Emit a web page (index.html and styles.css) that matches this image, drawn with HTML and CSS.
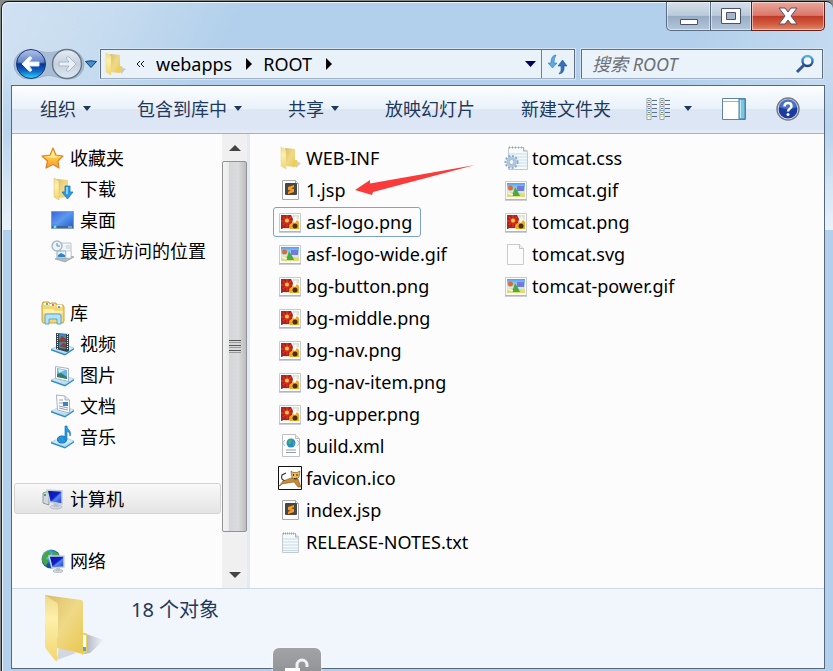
FILE: index.html
```html
<!DOCTYPE html>
<html lang="zh-CN">
<head>
<meta charset="utf-8">
<title>ROOT</title>
<link rel="stylesheet" href="styles.css">
</head>
<body>
<svg class="defs" aria-hidden="true">
  <defs>
    <linearGradient id="gold" x1="0" x2="1" y2="1"><stop offset="0" stop-color="#fdf0b0"/><stop offset="1" stop-color="#e9c95c"/></linearGradient>
    <linearGradient id="goldback" x1="0" x2="1" y2="1"><stop offset="0" stop-color="#d9bd67"/><stop offset=".5" stop-color="#efd987"/><stop offset="1" stop-color="#e8c84f"/></linearGradient>
    <linearGradient id="goldfront" x2="0" y2="1"><stop offset="0" stop-color="#efd98b"/><stop offset=".35" stop-color="#fdf0aa"/><stop offset="1" stop-color="#f3d672"/></linearGradient>
    <linearGradient id="shade"><stop offset="0" stop-color="#9aa1ae" stop-opacity=".8"/><stop offset="1" stop-color="#9aa1ae" stop-opacity="0"/></linearGradient>
    <linearGradient id="blueorb" x2="0" y2="1"><stop offset="0" stop-color="#9fb4e4"/><stop offset=".45" stop-color="#3c65bb"/><stop offset=".5" stop-color="#0b3392"/><stop offset=".75" stop-color="#0d6bc8"/><stop offset="1" stop-color="#35d8fb"/></linearGradient>
    <linearGradient id="greyorb" x2="0" y2="1"><stop offset="0" stop-color="#e6edf5"/><stop offset=".5" stop-color="#c5d1de"/><stop offset="1" stop-color="#dce8f3"/></linearGradient>
    <linearGradient id="sky" x2="0" y2="1"><stop offset="0" stop-color="#4f9ff0"/><stop offset=".6" stop-color="#cfeaf9"/><stop offset="1" stop-color="#f0e27c"/></linearGradient>
    <linearGradient id="screen" x2="1" y2="1"><stop offset="0" stop-color="#1c43c8"/><stop offset=".5" stop-color="#5596ee"/><stop offset="1" stop-color="#2157c9"/></linearGradient>
    <linearGradient id="monitor" x2="1" y2="1"><stop offset="0" stop-color="#0a17a0"/><stop offset=".5" stop-color="#0d20c8"/><stop offset=".6" stop-color="#5b86f2"/><stop offset="1" stop-color="#1733cc"/></linearGradient>
    <linearGradient id="star" x2="0" y2="1"><stop offset="0" stop-color="#fff08a"/><stop offset=".5" stop-color="#fdc644"/><stop offset="1" stop-color="#f7952a"/></linearGradient>
    <linearGradient id="base" x2="0" y2="1"><stop offset="0" stop-color="#f1f9fd"/><stop offset="1" stop-color="#a9d7f0"/></linearGradient>
    <linearGradient id="glyph" x2="0" y2="1"><stop offset="0" stop-color="#59b4ea"/><stop offset="1" stop-color="#1d3f8e"/></linearGradient>
    <radialGradient id="globe" cx=".35" cy=".3"><stop offset="0" stop-color="#a6e7f8"/><stop offset=".6" stop-color="#318fc9"/><stop offset="1" stop-color="#11539a"/></radialGradient>

    <symbol id="folder" viewBox="0 0 24 24">
      <path d="M18 15 23 17 18 22Z" fill="#aab0ba" opacity=".6"/>
      <path d="M7 2 17 3V21L7 20Z" fill="url(#goldback)"/><path d="M16 14h3v6l-3 1Z" fill="#efcf57"/>
      <path d="M3 1 8 4V23L3 20Z" fill="url(#goldfront)" stroke="#ead48a" stroke-width=".5"/>
    </symbol>
    <symbol id="downloads" viewBox="0 0 24 24">
      <path d="M6 2 17 3V20L7 21Z" fill="url(#goldback)"/><path d="M3 1 8 4V23L3 20Z" fill="url(#goldfront)" stroke="#d9bd69" stroke-width=".5"/>
      <path d="M14 9h5v6h3l-5.500 7-5.500-7h3Z" fill="#2d9be5" stroke="#1b76bd" stroke-width=".8"/><path d="M15 10h2v7h-2Z" fill="#83d0fa"/>
    </symbol>
    <symbol id="favorite" viewBox="0 0 24 24">
      <path d="M12 2 15 9 22 10 17 15 18 22 12 18.500 5 22 6.500 15 1 10 9 9Z" fill="url(#star)" stroke="#dc8527" stroke-width="1.200" stroke-linejoin="round"/>
      <path d="M12 5 13.500 10 18 11 12 12 6 11 10 10Z" fill="#fff6b8" opacity=".7"/>
    </symbol>
    <symbol id="desktop" viewBox="0 0 24 24">
      <path d="M.5 3.500h22v17H.5Z" fill="url(#screen)" stroke="#7f9bc8"/><path d="M1 18h21v2H1Z" fill="#3e6597"/><path d="M1 4h20L6 16H1Z" fill="#7db0f5" opacity=".3"/><circle cx="4" cy="19" r="1.500" fill="#77e0e8"/><path d="M17 19h4" stroke="#c2d7ef"/>
    </symbol>
    <symbol id="recent" viewBox="0 0 24 24">
      <path d="M4 20 15 15 23 18 14 23Z" fill="#b4babf" stroke="#8b939b" stroke-width=".6"/>
      <path d="M9 4h11v12H9Z" fill="#f1f5f8" stroke="#b9c4cb"/><path d="M15 6h4v4h-4Z" fill="#d3e0e9"/><path d="M6 12h9v7H6Z" fill="#e8f5fc" stroke="#90a8ba"/><path d="M7 16l3-2 4 2v2H7Z" fill="#2b86c9"/><path d="M15 12h5v7h-5Z" fill="#fff" stroke="#b0bcc5" stroke-width=".6"/>
      <circle cx="6" cy="7" r="5" fill="#eaf4fb" stroke="#adbac6" stroke-width="1.500"/><path d="M6 4v3h3" fill="none" stroke="#5e88b0"/>
    </symbol>
    <symbol id="library" viewBox="0 0 24 24">
      <path d="M1 4 2 1h6l1 2 1-1h5l1 2h6l1 2v14l-1 2H2l-1-2Z" fill="#f3d775" stroke="#c8a341"/>
      <path d="M2 8h10l2 2h8v2H2Z" fill="#fff0ac"/><path d="M3 3h5M9 4h5M16 5h5" stroke="#fffce8" stroke-width="2"/><circle cx="6" cy="3" r="1" fill="#33a946"/><circle cx="12" cy="4" r="1" fill="#e2432b"/><circle cx="18" cy="6" r="1" fill="#258be0"/>
      <path d="M4 23v-8q0-2 2-2h12q2 0 2 2v8h-4v-5H8v5Z" fill="#b5e3f6" stroke="#58a7ce"/>
    </symbol>
    <symbol id="plate" viewBox="0 0 24 24"><path d="M0 17 12 12 23 16 14 22Z" fill="url(#base)" stroke="#8bc3e2" stroke-width=".6"/><path d="M0 17 14 22 23 16v1.500L14 23.500 0 18.500Z" fill="#318ac6"/></symbol>
    <symbol id="video" viewBox="0 0 24 24">
      <use href="#plate"/><path d="M5 1 18 2v17l-2 1-11-3Z" fill="#35454c"/><path d="M8 2h7v7H8Z" fill="#3e87cb"/><path d="M8 10h7v7l-7-1Z" fill="#527ba5"/><path d="m8 8 3-4 4 3v3H8ZM9 14l3-3 3 1v4Z" fill="#8d3f2e"/><path d="M6.500 2v15M16.500 2v16" stroke="#e2edf0" stroke-dasharray="1 1"/>
    </symbol>
    <symbol id="pictures" viewBox="0 0 24 24">
      <use href="#plate"/><path d="M4.500 3.500 17.500 5.500V18.500L4.500 15.500Z" fill="#fff" stroke="#a6b3bf"/><path d="M6 5 16 7V16L6 14Z" fill="#69b3e7"/><path d="M6 11 10 10 16 14V16L6 14Z" fill="#357d64"/><path d="M7 6 14 7 8 10Z" fill="#d0ecfc"/>
    </symbol>
    <symbol id="docs" viewBox="0 0 24 24">
      <use href="#plate"/><path d="M5.500 1 14 2 18.500 6V19L6.500 16Z" fill="#fff" stroke="#a6b3bf"/><path d="M14 2V6H18.500" fill="#dbe6ee" stroke="#a6b3bf"/><path d="M8 6h4M8 9h4M8 12l9 2M8 14l9 2" stroke="#8d9abd"/><path d="M12 8h5v4h-5Z" fill="#3d82c3"/>
    </symbol>
    <symbol id="music" viewBox="0 0 24 24">
      <use href="#plate"/><ellipse cx="11" cy="14.500" rx="4.500" ry="3.500" fill="#2494df" stroke="#1476b9"/><path d="M14 15V1h2c0 4 5 4 3 10 0-4-2-4-3-5v9Z" fill="#299ae2" stroke="#1978b8" stroke-width=".7"/>
    </symbol>
    <symbol id="computer" viewBox="0 0 24 24">
      <path d="M2 6 8 4V18L2 16Z" fill="#d1d7dc" stroke="#8c98a1"/><path d="M3 7h2v2H3Z" fill="#3fac49"/><ellipse cx="15" cy="20" rx="6" ry="2" fill="#d3d8dd" stroke="#a3abb4" stroke-width=".6"/><path d="m12 15 5 1 1 4h-5Z" fill="#b8c1cb"/><path d="M6 3 21 4V17L9 15Z" fill="url(#monitor)" stroke="#c4ced9" stroke-width="1.500"/>
    </symbol>
    <symbol id="network" viewBox="0 0 24 24">
      <circle cx="10" cy="10" r="9.500" fill="url(#globe)"/><path d="M2 7Q6 0 10 3L9 7 5 9 7 13 5 17Q-1 12 2 7ZM13 2l5 3-2 3-4-2Z" fill="#48a83e"/>
      <ellipse cx="17" cy="22" rx="5" ry="1.700" fill="#d0d7e0" stroke="#9aa4af" stroke-width=".5"/><path d="M15 18h4v4h-4Z" fill="#b8c2cc"/><path d="M8 7 23 7V18L11 19Z" fill="url(#monitor)" stroke="#c7d3df" stroke-width="1.500"/>
    </symbol>
    <symbol id="jsp" viewBox="0 0 24 24">
      <path d="M4.500 2.500h13l3 3v16h-16Z" fill="#fdfdfd" stroke="#aaadb0"/><path d="M17.500 2.500v3h3" fill="#ececec" stroke="#a7a7a7"/><rect x="7" y="5" width="12" height="12" rx="1" fill="#474747"/><path d="M16 7 10 9v3l3 .8-3 1V16l6-2v-3l-3-.8 3-1Z" fill="#ff9a16"/>
    </symbol>
    <symbol id="frame" viewBox="0 0 24 24"><path d="M1.500 3.500h21v18h-21Z" fill="#fff" stroke="#c9cccf"/><path d="M1 22h22" stroke="#9da2a6"/></symbol>
    <symbol id="png" viewBox="0 0 24 24">
      <use href="#frame"/><path d="M3 5h18v14H3Z" fill="#dfe4d5"/><path d="M13 6l3 2 2-2 1 3 2 1v4h-7Z" fill="#f9faf7"/><path d="M3 5h10l2 4-1 5-3 4H3Z" fill="#b3211a"/><g stroke="#d8352a" stroke-width="1.500"><path d="M9 5v12M3 11h11M5 7l8 8M13 7l-8 8"/></g><path d="M3 5h2L3 8ZM3 17l2 2H3Z" fill="#4f5c31"/><circle cx="9" cy="10.500" r="2" fill="#f0cb3a"/><path d="m11 15 4-3 2 1 2-3 2 2v7h-9Z" fill="#f5a91e"/><circle cx="17" cy="16" r="2.500" fill="#4a2c12"/>
    </symbol>
    <symbol id="gif" viewBox="0 0 24 24">
      <use href="#frame"/><path d="M3 5h18v14H3Z" fill="url(#sky)"/><path d="M13 8h7v5h-7Z" fill="#7777dc"/><path d="M3 15q6-2 18 1v3H3Z" fill="#e7d96f"/><circle cx="6.500" cy="10" r="2.500" fill="#e26b28"/><path d="m8 18 3-9q3 4 5 9Z" fill="#45ab45"/><path d="m4 15 5 2" stroke="#e6fbf7" stroke-width="1.500"/>
    </symbol>
    <symbol id="blank" viewBox="0 0 24 24"><path d="M3.500 2.500h12l4 4v16h-16Z" fill="#fcfcfc" stroke="#c8cacc"/><path d="M15.500 2.500v4h4" fill="#f0f0f0" stroke="#c1c3c5"/></symbol>
    <symbol id="xml" viewBox="0 0 24 24">
      <path d="M4.500.500h13l4 4v18h-17Z" fill="#fff" stroke="#bfc2c5"/><path d="M17.500.500v4h4" fill="#e5e5e5" stroke="#bfc2c5"/><circle cx="13" cy="9" r="4.500" fill="#268ccc"/><path d="M10 7l3-2 1 3-3 3Zm5 1 2 1-2 4Z" fill="#4ab15a"/><path d="M7 6 4.500 9 7 12M19 6l2.500 3L19 12" fill="none" stroke="#a6b5dd"/><path d="M8 16h10M8 18.500h10" stroke="#9797b4" stroke-width="1.200"/>
    </symbol>
    <symbol id="cat" viewBox="0 0 24 24">
      <path d="M.5.500h23v23H.5Z" fill="#fff" stroke="#111"/><path d="M8 15Q2 14 4 9L8 7" fill="none" stroke="#333" stroke-width="1.200"/><path d="M1 20 5 15l8-3 7 1 3 8h-3l-4-5-6 1-6 1-2 2Z" fill="#c78a35" stroke="#714a1d" stroke-width=".5"/><path d="m13 5 2 1.500h4L22 5l-1 6-3 3-4-2Z" fill="#edbd54" stroke="#714a1d" stroke-width=".6"/><path d="M15.500 8v2M19 8v2M16 12l1 1 2-1" stroke="#382416" fill="none"/>
    </symbol>
    <symbol id="txt" viewBox="0 0 24 24">
      <path d="M4.500 3.500h13l3 3v16h-16Z" fill="#f6f9fb" stroke="#c4c9cd"/><path d="M5 9h15M5 12h15M5 15h15M5 18h15M5 20.500h15" stroke="#c4dbe7"/><path d="M5 3.500h12" stroke="#999ea3" stroke-width="2" stroke-dasharray="1 1"/><path d="M17.500 3v4h3" fill="#e9ecee" stroke="#a9aeb3"/>
    </symbol>
    <symbol id="css" viewBox="0 0 24 24">
      <path d="M4.500 1.500h15l4 4v18h-19Z" fill="#f7fafb" stroke="#c2c8cd"/><path d="M5 8h18M5 11h18M5 14h18M5 17h18M5 20h18" stroke="#c2dae8"/><path d="M5 1.500h15" stroke="#9ca1a5" stroke-width="2" stroke-dasharray="1 2"/><path d="M19.500 1v4h4" fill="#eaecee" stroke="#a9aeb3"/>
      <circle cx="7.500" cy="16" r="6" fill="none" stroke="#8ba7c7" stroke-width="2" stroke-dasharray="2 1.500"/><circle cx="7.500" cy="16" r="4" fill="#f1f6fa" stroke="#abc9e3" stroke-width="2.500"/><circle cx="7.500" cy="16" r="2.500" fill="none" stroke="#819fbd" stroke-width=".7"/>
    </symbol>
  </defs>
</svg>

<div class="window">
  <header class="titlebar">
    <div class="caption">
      <button class="min" aria-label="最小化"><svg width="20" height="10" viewBox="0 0 20 10"><path d="M1.500 2.500h17v5h-17Z" fill="#fff" stroke="#4c5368"/></svg></button>
      <button class="max" aria-label="最大化"><svg width="20" height="16" viewBox="0 0 20 16"><path d="M.5.500h19v15H.5Z" fill="#fff" stroke="#4c5368"/><path d="M5.500 4.500h9v7h-9Z" fill="#a5b6ca" stroke="#4c5368"/></svg></button>
      <button class="close" aria-label="关闭"><svg width="20" height="18" viewBox="0 0 20 18"><path d="M1 1h6l3 4 3-4h6l-6 8 6 8h-6l-3-4-3 4H1l6-8Z" fill="#fff" stroke="#545368"/></svg></button>
    </div>
  </header>

  <div class="navrow">
    <div class="history">
      <svg class="well" viewBox="0 0 84 36" aria-hidden="true"><path d="M18 1C30 1 35 4 42 4S54 1 66 1A17 17 0 0 1 66 35C54 35 49 31 42 31S30 35 18 35A17 17 0 0 1 18 1Z" fill="#a8bdd3" stroke="#8fa3b9" stroke-opacity=".6"/></svg>
      <button aria-label="后退"><svg viewBox="0 0 32 32"><circle cx="16" cy="16" r="14.500" fill="url(#blueorb)" stroke="#173578"/><path d="M3 14a13 12 0 0 1 26 0Q16 18 3 14Z" fill="#fff" opacity=".2"/><path d="M7 16 14 9q2-1 3 1L14 14h10v4H14l3 4q-1 2-3 1Z" fill="#fff" stroke="#dce8fa" stroke-linejoin="round"/></svg></button>
      <button aria-label="前进"><svg viewBox="0 0 32 32"><circle cx="16" cy="16" r="14.500" fill="url(#greyorb)" stroke="#69788b" stroke-width="1.500"/><path d="M25 16 18 9q-2-1-3 1L18 14H8v4h10l-3 4q1 2 3 1Z" fill="#e9eff5" stroke="#aab8c8" stroke-linejoin="round"/></svg></button>
      <button class="recentpages" aria-label="最近浏览的页面"><svg viewBox="0 0 12 8"><path d="M.5 1.500Q6 0 11.500 1.500L6 7.500Z" fill="#3d8fd0" stroke="#17406f"/></svg></button>
    </div>
    <nav class="address" aria-label="地址">
      <svg class="icon" aria-hidden="true"><use href="#folder"/></svg>
      <button class="chevrons" aria-label="上级文件夹"><svg width="9" height="8" viewBox="0 0 9 8"><path d="M4 1 1 4 4 7M8 1 5 4 8 7" fill="none" stroke="#111"/></svg></button>
      <a href="#webapps">webapps</a>
      <svg class="crumb" viewBox="0 0 6 12" aria-hidden="true"><path d="M0 0 6 6 0 12Z"/></svg>
      <a href="#root">ROOT</a>
      <svg class="crumb" viewBox="0 0 6 12" aria-hidden="true"><path d="M0 0 6 6 0 12Z"/></svg>
      <button class="drop" aria-label="以前的位置"><svg width="11" height="6" viewBox="0 0 11 6"><path d="M0 0H11L5.500 6Z" fill="#00005c"/></svg></button>
      <button class="refresh" aria-label="刷新"><svg width="24" height="24" viewBox="0 0 24 24"><path d="M10 3Q5 3 5 11H2l4.500 5 4.500-5H8Q8 6 10 3Z" fill="#5aa8e6" stroke="#2b78c0" stroke-width=".6"/><path d="M13 22q6-1 5-8h3l-4.500-6-4.500 6h3q1 5-2 8Z" fill="#2f71bd" stroke="#215391" stroke-width=".6"/></svg></button>
    </nav>
    <form class="search" role="search">
      <input type="text" aria-label="搜索 ROOT" placeholder="搜索 ROOT">
      <button type="button" aria-label="搜索"><svg width="20" height="20" viewBox="0 0 20 20"><circle cx="12.500" cy="7" r="5" fill="#eef7fd" stroke="url(#glyph)" stroke-width="2.500"/><path d="M9 11 2 18" stroke="#2f559f" stroke-width="3"/></svg></button>
    </form>
  </div>

  <div class="client">
    <div class="toolbar" role="toolbar" aria-label="命令">
      <button>组织<i class="caret"></i></button>
      <button>包含到库中<i class="caret"></i></button>
      <button>共享<i class="caret"></i></button>
      <button>放映幻灯片</button>
      <button>新建文件夹</button>
      <div class="views">
        <button aria-label="更改视图"><svg width="26" height="22" viewBox="0 0 26 22"><path d="M1 .5h4v21H1ZM14 .5h4v21h-4Z" fill="#fff" stroke="#96a5b8"/><path d="M1 4.500h4M1 8.500h4M1 12.500h4M1 16.500h4M14 4.500h4M14 8.500h4M14 12.500h4M14 16.500h4" stroke="#96a5b8"/><path d="M6 2.500h5M6 6.500h5M6 10.500h5M6 14.500h5M6 18.500h5M19 2.500h5M19 6.500h5M19 10.500h5M19 14.500h5M19 18.500h5" stroke="#5a7187"/><path d="M2 2.500h2M15 2.500h2M2 14.500h2M15 14.500h2" stroke="#57a344"/><path d="M2 6.500h2M15 6.500h2" stroke="#d8362e"/><path d="M2 10.500h2M15 10.500h2" stroke="#3380dc"/><path d="M2 18.500h2M15 18.500h2" stroke="#e8cc30"/></svg><i class="caret wide"></i></button>
        <button aria-label="显示预览窗格"><svg width="24" height="22" viewBox="0 0 24 22"><path d="M.5.500h23v21H.5Z" fill="#fff" stroke="#5f83ab"/><path d="M1 3.500h16" stroke="#9daec5"/><path d="M17 1h6v20h-6Z" fill="#7dc5df" stroke="#3d84a4"/><path d="M18.500 2v18" stroke="#c4edf5"/></svg></button>
        <button aria-label="获取帮助"><svg width="24" height="24" viewBox="0 0 24 24"><circle cx="12" cy="12" r="11" fill="#e7ebf2" stroke="#777e8b" stroke-width="1.500"/><circle cx="12" cy="12" r="9.500" fill="#1b3c9f"/><path d="M3 10a9 8 0 0 1 18 0Q12 14 3 10Z" fill="#6d94e0" opacity=".6"/><path d="M8.500 9.500Q8.500 6 12 6t3.500 3q0 2-2 3-1.500.8-1.500 2.500" fill="none" stroke="#fff" stroke-width="2.500"/><circle cx="12" cy="17.500" r="1.500" fill="#fff"/></svg></button>
      </div>
    </div>

    <div class="panes">
      <nav class="tree" aria-label="导航窗格">
        <ul>
          <li><a href="#fav"><svg class="icon"><use href="#favorite"/></svg>收藏夹</a>
            <ul>
              <li><a href="#dl"><svg class="icon"><use href="#downloads"/></svg>下载</a></li>
              <li><a href="#desk"><svg class="icon"><use href="#desktop"/></svg>桌面</a></li>
              <li><a href="#rec"><svg class="icon"><use href="#recent"/></svg>最近访问的位置</a></li>
            </ul></li>
          <li><a href="#lib"><svg class="icon"><use href="#library"/></svg>库</a>
            <ul>
              <li><a href="#vid"><svg class="icon"><use href="#video"/></svg>视频</a></li>
              <li><a href="#pic"><svg class="icon"><use href="#pictures"/></svg>图片</a></li>
              <li><a href="#doc"><svg class="icon"><use href="#docs"/></svg>文档</a></li>
              <li><a href="#mus"><svg class="icon"><use href="#music"/></svg>音乐</a></li>
            </ul></li>
          <li><a class="current" href="#pc"><svg class="icon"><use href="#computer"/></svg>计算机</a></li>
          <li><a href="#net"><svg class="icon"><use href="#network"/></svg>网络</a></li>
        </ul>
      </nav>
      <div class="scrollbar">
        <button aria-label="向上滚动"><svg width="12" height="6" viewBox="0 0 12 6"><path d="M0 6 6 0 12 6Z" fill="#444"/></svg></button>
        <div class="thumb"><i></i><i></i><i></i></div>
        <button aria-label="向下滚动"><svg width="12" height="6" viewBox="0 0 12 6"><path d="M0 0H12L6 6Z" fill="#444"/></svg></button>
      </div>
      <main class="files">
        <ul>
          <li><a href="#f1"><svg class="icon"><use href="#folder"/></svg>WEB-INF</a></li>
          <li class="marked"><a href="#f2"><svg class="icon"><use href="#jsp"/></svg>1.jsp</a><svg class="pointer" viewBox="0 0 120 32" aria-hidden="true"><path d="M0 25 15 15V18.500L120 0 18 27 17 30Z" fill="#f93b3b"/></svg></li>
          <li><a class="focused" href="#f3"><svg class="icon"><use href="#png"/></svg>asf-logo.png</a></li>
          <li><a href="#f4"><svg class="icon"><use href="#gif"/></svg>asf-logo-wide.gif</a></li>
          <li><a href="#f5"><svg class="icon"><use href="#png"/></svg>bg-button.png</a></li>
          <li><a href="#f6"><svg class="icon"><use href="#png"/></svg>bg-middle.png</a></li>
          <li><a href="#f7"><svg class="icon"><use href="#png"/></svg>bg-nav.png</a></li>
          <li><a href="#f8"><svg class="icon"><use href="#png"/></svg>bg-nav-item.png</a></li>
          <li><a href="#f9"><svg class="icon"><use href="#png"/></svg>bg-upper.png</a></li>
          <li><a href="#f10"><svg class="icon"><use href="#xml"/></svg>build.xml</a></li>
          <li><a href="#f11"><svg class="icon"><use href="#cat"/></svg>favicon.ico</a></li>
          <li><a href="#f12"><svg class="icon"><use href="#jsp"/></svg>index.jsp</a></li>
          <li><a href="#f13"><svg class="icon"><use href="#txt"/></svg>RELEASE-NOTES.txt</a></li>
          <li><a href="#f14"><svg class="icon"><use href="#css"/></svg>tomcat.css</a></li>
          <li><a href="#f15"><svg class="icon"><use href="#gif"/></svg>tomcat.gif</a></li>
          <li><a href="#f16"><svg class="icon"><use href="#png"/></svg>tomcat.png</a></li>
          <li><a href="#f17"><svg class="icon"><use href="#blank"/></svg>tomcat.svg</a></li>
          <li><a href="#f18"><svg class="icon"><use href="#gif"/></svg>tomcat-power.gif</a></li>
        </ul>
      </main>
    </div>

    <footer class="details">
      <svg width="64" height="72" viewBox="0 0 64 72" aria-hidden="true"><path d="M44 42 62 48 48 61 42 62Z" fill="url(#shade)"/><path d="M15 68 17 55 34 61Z" fill="#8c93a3" opacity=".3"/><path d="M3 3 39 8Q41 8 41 11V62L15 56Z" fill="url(#goldback)"/><path d="M40 41h3q2 0 2 2V60l-5 3Z" fill="#ecd057"/><path d="M41 43h3v15h-3Z" fill="#fff"/><path d="M41 55h3v4h-3Z" fill="#5a9fe2"/><path d="M3 3 15 11Q16 12 16 14V45L15 46V69Q14 70 12 67L4 57Q3 55 3 53Z" fill="url(#goldfront)"/></svg>
      <p>18 个对象</p>
    </footer>
  </div>

  <div class="badge" aria-hidden="true"><svg width="48" height="24" viewBox="0 0 48 24"><path d="M12 20h15v4H12Z" fill="#fff"/><path d="M24 20v-3a5 5 0 0 1 10 0v2" fill="none" stroke="#f1f1f1" stroke-width="3"/></svg></div>
</div>
</body>
</html>
```

FILE: styles.css
```css
* { box-sizing: border-box; }

body {
  margin: 0;
  min-height: 100vh;
  display: flex;
  padding: 1px 0 0 1px;
  background: #858a88;
  color: #000;
  font: 18px/30px "Noto Sans", "Noto Sans CJK SC", sans-serif;
}

.defs { position: absolute; width: 0; height: 0; }
svg { display: block; flex: none; }
ul { list-style: none; margin: 0; padding: 0; }
a { color: inherit; text-decoration: none; }

button {
  display: flex;
  align-items: center;
  justify-content: center;
  padding: 0;
  border: 0;
  background: none;
  color: inherit;
  font: inherit;
  white-space: nowrap;
}

.icon { width: 24px; height: 24px; }

.window {
  position: relative;
  flex: 1;
  display: flex;
  flex-direction: column;
  min-width: 0;
  overflow: hidden;
  padding: 0 8px 2px 9px;
  border-top: 1px solid #111;
  border-left: 1px solid #222;
  border-radius: 7px 7px 0 0;
  background:
    linear-gradient(#cadff2, #b9d4ed 40%, #e9f2fa) left 0 top 60px / 9px 168px no-repeat,
    linear-gradient(#c6dbef, #b9d4ed 40%, #e9f2fa) right 0 top 60px / 8px 168px no-repeat,
    linear-gradient(115deg, #d0e1f2 0, #c9ddf0 90px, #b2d0eb 220px, #b2d0eb 640px, #cee0f2 850px) top / 100% 86px no-repeat,
    #b2d0eb;
  box-shadow: inset 1px 1px #eaf5fd;
}

.titlebar { height: 47px; }
.caption {
  display: flex;
  justify-content: flex-end;
}
.caption button {
  height: 29px;
  border: 1px solid #5b6b80;
  border-top: 0;
  border-right: 0;
  box-shadow: inset 0 0 0 1px #ffffff80;
  background: linear-gradient(#d5e0ec, #bacada 48%, #97acc3 50%, #b2c7dc);
}
.caption .min { width: 44px; padding-top: 12px; border-radius: 0 0 0 5px; }
.caption .max { width: 41px; }
.caption .close {
  width: 74px;
  border: 1px solid #641f1b;
  border-top: 0;
  border-radius: 0 0 5px;
  background: linear-gradient(#eba89b, #da776a 48%, #bf3927 50%, #d35e40 80%, #dc8b71);
}

.navrow {
  display: flex;
  height: 30px;
  margin-bottom: 6px;
}
.history {
  position: relative;
  display: flex;
  gap: 4px;
  align-items: center;
  width: 89px;
  padding-left: 4px;
}
.history .well { position: absolute; left: 2px; top: -2px; width: 72px; height: 35px; }
.history button { position: relative; width: 32px; height: 32px; flex: none; }
.history button svg { width: 32px; height: 32px; }
.history .recentpages, .history .recentpages svg { width: 12px; height: 8px; }
.history .recentpages { margin-left: -2px; }

.address {
  flex: 1;
  display: flex;
  align-items: center;
  border: 1px solid #5f6f80;
  border-bottom-color: #9fb0c4;
  background: #e9f1f9;
  line-height: 28px;
  box-shadow: 0 0 0 1px #d4e4f3;
}
.address .icon { margin: 0 9px 0 2px; }
.address a { margin-left: 11px; }
.address .crumb { width: 6px; height: 12px; margin-left: 14px; }
.address .drop { margin-left: auto; width: 22px; height: 28px; }
.address .refresh { width: 33px; height: 28px; border-left: 1px solid #71808f; }

.search {
  display: flex;
  align-items: center;
  width: 242px;
  margin: 0 2px 0 6px;
  padding: 0 7px 0 10px;
  border: 1px solid #5f6f80;
  border-bottom-color: #9fb0c4;
  background: #ebf3fa;
  box-shadow: 0 0 0 1px #d4e4f3;
}
.search input {
  flex: 1;
  min-width: 0;
  padding: 0;
  border: 0;
  outline: 0;
  background: none;
  font: italic 18px/28px "Noto Sans", "Noto Sans CJK SC", sans-serif;
}
.search input::placeholder { color: #6d7176; opacity: 1; }

.client {
  flex: 1;
  display: flex;
  flex-direction: column;
  border: 1px solid #55687d;
}

.toolbar {
  display: flex;
  align-items: center;
  gap: 46px;
  height: 48px;
  padding: 0 23px 2px 28px;
  border-bottom: 1px solid #a2b1c8;
  background: linear-gradient(#fcfeff, #e9f1fa 48%, #dde6f4 50%, #dce6f4 90%, #e6edf7);
  color: #1e395b;
}
.views { display: flex; align-items: center; gap: 30px; margin: 0 0 0 auto; padding-right: 5px; }
.views { margin-left: -11px; }
.caret {
  margin-left: 7px;
  border: 4px solid transparent;
  border-top: 5px solid #1e395b;
  border-bottom: 0;
}
.caret.wide { margin-left: 12px; }

.panes {
  flex: 1;
  display: flex;
  background: #fcfcfc;
}
.tree {
  width: 210px;
  padding: 8px 1px 9px 2px;
}
.tree > ul { display: grid; gap: 31px; }
.tree a {
  display: flex;
  align-items: center;
  gap: 5px;
  height: 31px;
  padding-left: 26px;
  border: 1px solid transparent;
  border-radius: 3px;
  white-space: nowrap;
}
.tree ul ul a { padding-left: 36px; }
.tree .current {
  border-color: #d4d4d4;
  background: linear-gradient(#f9f9f9, #e4e4e4);
}

.scrollbar {
  display: flex;
  flex-direction: column;
  width: 28px;
  border-right: 3px solid #e0ebf7;
  background: #f0f0f0;
}
.scrollbar button { height: 27px; }
.thumb {
  flex: 1;
  display: flex;
  flex-direction: column;
  align-items: center;
  justify-content: center;
  gap: 2px;
  margin-bottom: 29px;
  border: 1px solid #929292;
  border-radius: 2px;
  background: linear-gradient(90deg, #f4f4f4, #e9e9eb 26%, #d4d5d8 28%, #dbdcde 65%, #bdbdc0);
}
.thumb i {
  width: 12px;
  height: 3px;
  border-top: 1px solid #555;
  border-bottom: 1px solid #999;
}

.files { flex: 1; padding: 8px 0 8px 23px; }
.files ul {
  display: grid;
  grid-auto-flow: column;
  grid-template-rows: repeat(13, 32px);
  grid-auto-columns: 226px;
}
.files li { display: flex; align-items: center; }
.files a {
  display: flex;
  align-items: center;
  gap: 4px;
  height: 30px;
  padding: 0 8px 0 4px;
  border: 1px solid transparent;
  border-radius: 3px;
  white-space: nowrap;
}
.files .focused { border-color: #7da2ce; }
.marked { position: relative; }
.pointer { position: absolute; left: 82px; top: -9px; width: 120px; height: 32px; }

.details {
  display: flex;
  gap: 25px;
  height: 80px;
  padding: 3px 0 0 30px;
  border-top: 1px solid #cbd8e8;
  background: #f1f5fc;
  color: #1e395b;
}
.details p { margin: 3px 0; font-size: 20px; }

.badge {
  position: absolute;
  left: 271px;
  bottom: 0;
  width: 48px;
  height: 23px;
  overflow: hidden;
  border-radius: 6px 6px 0 0;
  background: linear-gradient(#a1a3a7, #929498);
  box-shadow: 0 0 3px #fff;
}
```
